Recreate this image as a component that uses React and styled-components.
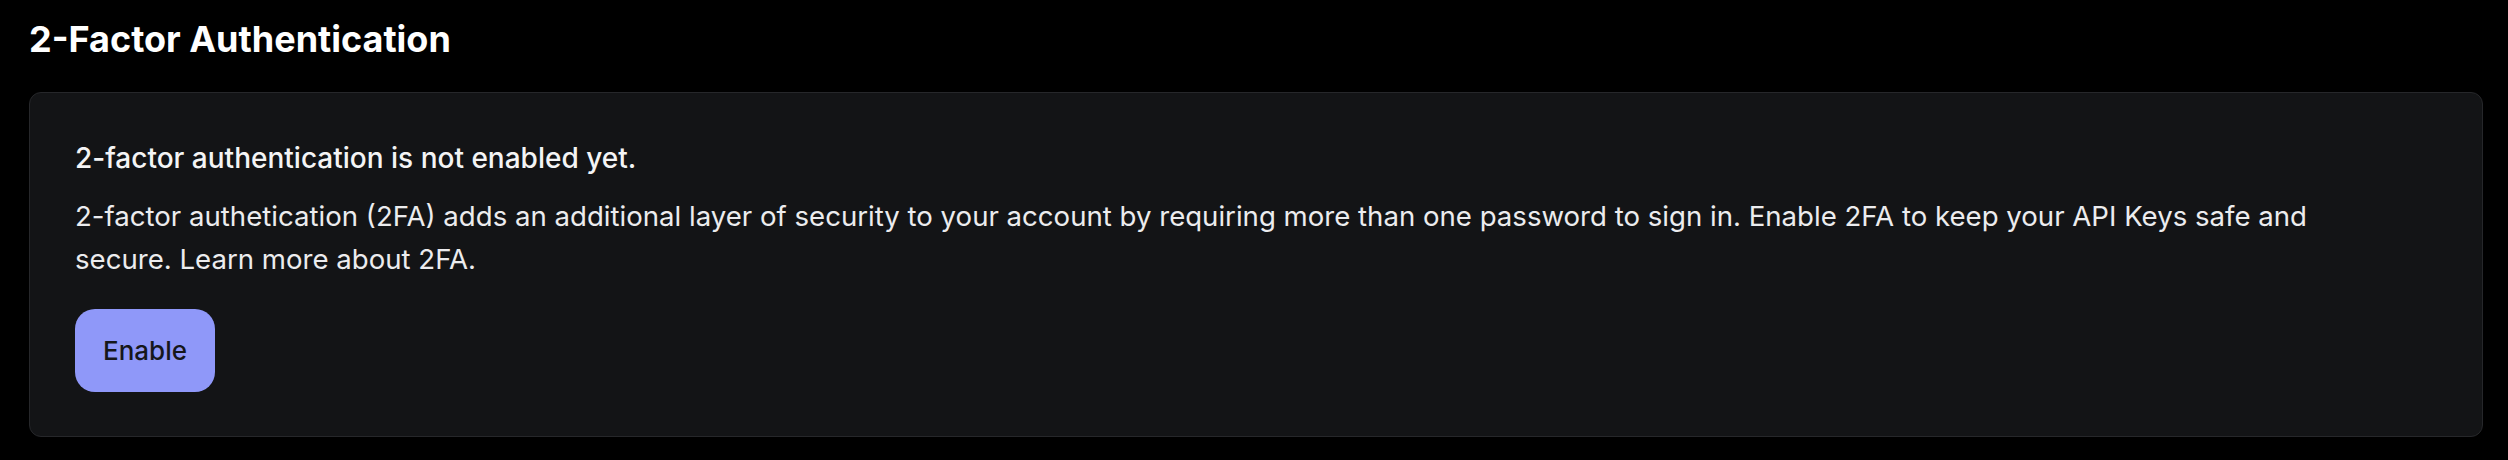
import React from 'react';
import styled, { createGlobalStyle } from 'styled-components';

const GlobalStyle = createGlobalStyle`
  html, body {
    margin: 0;
    padding: 0;
    background: #000;
  }
  body {
    font-family: Inter, "Liberation Sans", sans-serif;
    color: #f4f4f5;
  }
`;

const Page = styled.main`
  padding: 19px 25px 25px 29px;
`;

const Title = styled.h1`
  margin: 0 0 32px;
  font-size: 36px;
  line-height: 41px;
  font-weight: 700;
  color: #fff;
`;

const Card = styled.section`
  background: #131416;
  border: 1px solid #26272a;
  border-radius: 12px;
  padding: 44px 45px 44px;
  display: flex;
  flex-direction: column;
  align-items: flex-start;
`;

const Status = styled.p`
  margin: 0 0 15px;
  font-size: 28px;
  line-height: 43px;
  font-weight: 500;
  color: #f4f4f5;
`;

const Desc = styled.p`
  margin: 0 0 28px;
  max-width: 2300px;
  font-size: 27.6px;
  line-height: 43px;
  font-weight: 400;
  color: #ececee;
`;

const Button = styled.button`
  display: flex;
  align-items: center;
  justify-content: center;
  width: 140px;
  height: 83px;
  border: none;
  border-radius: 20px;
  background: #8f98f9;
  color: #16171b;
  font-family: inherit;
  font-size: 26px;
  font-weight: 500;
  cursor: pointer;
`;

export default function App() {
  return (
    <>
      <GlobalStyle />
      <Page>
        <Title>2-Factor Authentication</Title>
        <Card>
          <Status>2-factor authentication is not enabled yet.</Status>
          <Desc>
            2-factor authetication (2FA) adds an additional layer of security to your account by requiring more
            than one password to sign in. Enable 2FA to keep your API Keys safe and secure. Learn more about 2FA.
          </Desc>
          <Button>Enable</Button>
        </Card>
      </Page>
    </>
  );
}
